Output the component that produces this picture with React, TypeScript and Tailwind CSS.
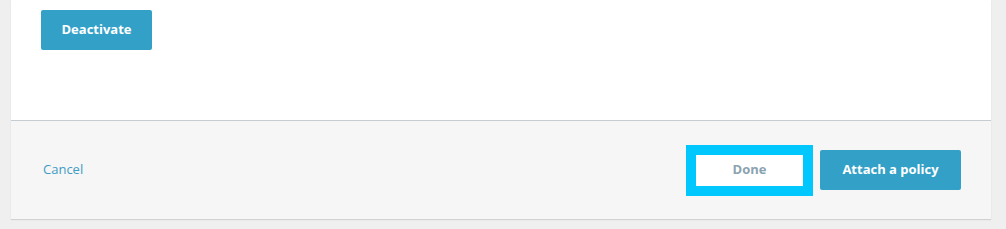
import React from 'react';

const App: React.FC = () => {
  return (
    <div
      className="w-[1006px] h-[229px] overflow-hidden bg-[#efefef] pl-[11px] pr-[15px]"
      style={{ fontFamily: '"Open Sans", "Liberation Sans", sans-serif' }}
    >
      <div className="bg-white shadow-[0_1px_1px_rgba(0,0,0,0.12)]">
        {/* Body */}
        <div className="h-[121px] px-[30px] pt-[10px] border-b border-[#c5ccd2]">
          <button className="h-[40px] w-[111px] rounded-[2px] bg-[#33a0c7] text-[13px] font-bold text-white">
            Deactivate
          </button>
        </div>

        {/* Footer */}
        <div className="h-[98px] bg-[#f6f6f6] flex items-center justify-between pl-[32px] pr-[30px]">
          <button className="text-[13px] text-[#3f9cc4]">Cancel</button>
          <div className="flex items-center gap-[7px]">
            <div className="border-[10px] border-[#00c8ff]">
              <button className="h-[31px] w-[107px] bg-white text-[13px] font-bold text-[#8aa3b0] block">
                Done
              </button>
            </div>
            <button className="h-[40px] w-[141px] rounded-[2px] bg-[#33a0c7] text-[13px] font-bold text-white">
              Attach a policy
            </button>
          </div>
        </div>
      </div>
    </div>
  );
};

export default App;
